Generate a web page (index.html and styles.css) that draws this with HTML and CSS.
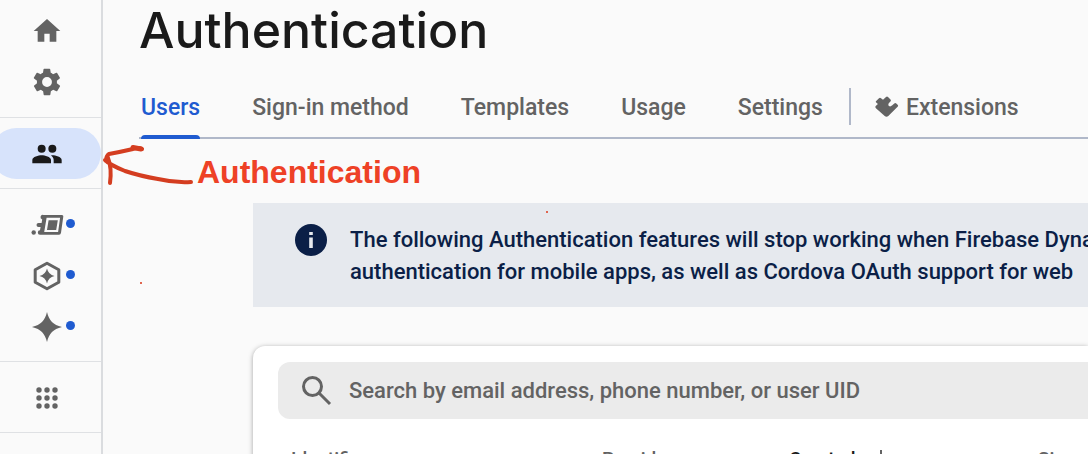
FILE: index.html
```html
<!DOCTYPE html>
<html lang="en">
<head>
<meta charset="utf-8">
<title>Authentication</title>
<link rel="stylesheet" href="styles.css">
</head>
<body>
<div class="app">
  <nav class="sidebar" aria-label="Project">
    <div class="group">
      <a class="item" href="#" aria-label="Project overview"><svg class="icon" viewBox="0 0 24 24"><path d="M10 20v-6h4v6h5v-8h3L12 3 2 12h3v8z"/></svg></a>
      <a class="item" href="#" aria-label="Settings"><svg class="icon" viewBox="0 0 24 24"><path fill-rule="evenodd" d="M19.400 13a7.500 7.500 0 0 0 0-2l2.100-1.600a.5.5 0 0 0 .1-.7l-2-3.400a.5.5 0 0 0-.6-.2l-2.500 1a7.300 7.300 0 0 0-1.700-1l-.4-2.600a.5.5 0 0 0-.5-.4h-4a.5.5 0 0 0-.5.4l-.4 2.600a7.300 7.300 0 0 0-1.700 1l-2.500-1a.5.5 0 0 0-.6.2l-2 3.400a.5.5 0 0 0 .1.700L4.500 11a7.500 7.500 0 0 0 0 2l-2.100 1.600a.5.5 0 0 0-.1.700l2 3.400c.1.200.4.300.6.200l2.500-1c.5.400 1.100.7 1.700 1l.4 2.600c0 .2.2.4.5.4h4c.2 0 .5-.2.500-.4l.4-2.600c.6-.3 1.200-.6 1.700-1l2.500 1c.2.100.5 0 .6-.2l2-3.400a.5.5 0 0 0-.1-.7zM12 15.700a3.700 3.700 0 1 1 0-7.400 3.700 3.700 0 0 1 0 7.400z"/></svg></a>
    </div>
    <div class="group">
      <a class="item active" href="#" aria-label="Authentication" aria-current="page"><svg class="icon" viewBox="0 0 24 24"><path d="M16 11a3 3 0 1 0 0-6 3 3 0 0 0 0 6zM8 11a3 3 0 1 0 0-6 3 3 0 0 0 0 6zm0 2c-2.330 0-7 1.170-7 3.500V19h14v-2.500c0-2.330-4.670-3.500-7-3.500zm8 0c-.29 0-.62.020-.97.050 1.160.84 1.970 1.970 1.970 3.450V19h6v-2.500c0-2.330-4.670-3.500-7-3.500z"/></svg></a>
    </div>
    <div class="group">
      <a class="item" href="#" aria-label="Data Connect"><svg class="icon" viewBox="0 0 32 32"><path fill-rule="evenodd" d="M12.500 6H31q1.500 0 1.300 1.500l-2.300 16.300q-.3 1.900-2 1.900H9a2.200 2.200 0 0 1 0-4.400l.6-3.300H7.500a2 2 0 0 1 0-4h3.100l.6-3.500A2.300 2.300 0 0 1 12.500 6zm3.100 2.800-2.400 14.100h13.900l2-14.100zM17.600 11.300h9.200l-1.600 9.700h-9.200z"/><circle cx="2.700" cy="23.500" r="2.200"/></svg><span class="badge"></span></a>
      <a class="item" href="#" aria-label="App Hosting"><svg class="icon" viewBox="0 0 32 32"><path class="outline" d="M16 3.200 27.800 9.800V22.200L16 28.800 4.200 22.200V9.800z"/><path d="M16 8.500Q17.400 14.600 23.500 16 17.400 17.400 16 23.500 14.600 17.400 8.500 16 14.600 14.600 16 8.500z"/></svg><span class="badge"></span></a>
      <a class="item" href="#" aria-label="AI Logic"><svg class="icon" viewBox="0 0 32 32"><path d="M16 1C18.300 10 22 13.700 31 16 22 18.300 18.300 22 16 31 13.700 22 10 18.300 1 16 10 13.700 13.700 10 16 1z"/></svg><span class="badge"></span></a>
    </div>
    <div class="group">
      <a class="item" href="#" aria-label="All products"><svg class="icon" viewBox="0 0 32 32"><circle cx="8" cy="8" r="2.700"/><circle cx="16" cy="8" r="2.700"/><circle cx="24" cy="8" r="2.700"/><circle cx="8" cy="16" r="2.700"/><circle cx="16" cy="16" r="2.700"/><circle cx="24" cy="16" r="2.700"/><circle cx="8" cy="24" r="2.700"/><circle cx="16" cy="24" r="2.700"/><circle cx="24" cy="24" r="2.700"/></svg></a>
    </div>
  </nav>
  <main class="main">
    <h1 class="title">Authentication</h1>
    <nav class="tabs" aria-label="Authentication sections">
      <a class="tab selected" href="#" aria-current="page">Users</a>
      <a class="tab" href="#">Sign-in method</a>
      <a class="tab" href="#">Templates</a>
      <a class="tab" href="#">Usage</a>
      <a class="tab" href="#">Settings</a>
      <a class="tab extensions" href="#"><svg class="puzzle" viewBox="0 0 24 24"><path d="M1.200 5 4 2.200Q5 1.300 6 2.200L8 3.800 11 1Q12 0 13 1L15.500 3.500Q16.300 4.500 15.400 5.400L14 7Q12.700 8.800 14 10 15.300 11 17 9.600L19.300 7.400Q20.300 6.500 21.300 7.400L22.600 8.700Q23.600 9.700 22.600 10.700L13.300 20Q11.500 21.600 9.700 20L1.200 12.500Q-.4 11 1 9.700L2.900 8 1.200 6.500Q.4 5.700 1.200 5z"/></svg>Extensions</a>
    </nav>
    <div class="content">
      <section class="banner">
        <svg class="info" viewBox="0 0 32 32"><circle cx="16" cy="16" r="16"/><path class="mark" d="M14.200 13.500h3.600V24h-3.600zM14.200 8h3.600v3h-3.600z"/></svg>
        <p class="message">The following Authentication features will stop working when Firebase Dynamic Links shuts down: email link<br>authentication for mobile apps, as well as Cordova OAuth support for web</p>
      </section>
      <section class="card">
        <label class="search">
          <svg class="lens" viewBox="0 0 32 32"><circle cx="11.500" cy="11.500" r="9"/><path d="M18 18 29 29"/></svg>
          <input class="field" type="search" placeholder="Search by email address, phone number, or user UID" aria-label="Search users">
        </label>
        <table class="users">
          <colgroup><col class="col-id"><col class="col-providers"><col class="col-created"><col></colgroup>
          <thead><tr><th>Identifier</th><th>Providers</th><th class="sorted"><span class="sort-label">Created <svg class="sort" viewBox="0 0 20 20"><path d="M10 1v16M3 11l7 7 7-7"/></svg></span></th><th>Signed In</th></tr></thead>
        </table>
      </section>
    </div>
  </main>
  <div class="note">
    <svg class="arrow" viewBox="0 0 100 50"><path d="M42 9Q38 7 33 9 20 12 9 14 6 16 6 21M5 20Q10 25 25 31 40 36 58 39 75 43 91 42M8 18Q12 28 10 43"/><path class="tip" d="M33 7.500 41 9"/></svg>
    <span class="note-text">Authentication</span>
  </div>
  <span class="speck speck-left"></span>
  <span class="speck speck-banner"></span>
</div>
</body>
</html>
```
FILE: styles.css
```css
* { box-sizing: border-box; }
body { margin: 0; background: #fafafa; color: #1a1a1a; font-family: Roboto, "Liberation Sans", sans-serif; overflow: hidden; }
a { color: inherit; text-decoration: none; }
.app { position: relative; display: flex; height: 100vh; overflow: hidden; }
.sidebar { flex: none; width: 103px; border-right: 2px solid #dadcdf; color: #636363; overflow: hidden; }
.group { padding: 10px 0 9px; border-bottom: 1px solid #dfe1e4; }
.group:first-child { padding: 5px 0 10px; }
.item { position: relative; display: flex; align-items: center; height: 51px; padding-left: 31px; }
.active { margin-left: -9px; padding-left: 40px; border-radius: 26px; background: #d7e3fb; color: #1a1a1a; }
.icon { width: 32px; height: 32px; fill: currentColor; overflow: visible; }
.outline { fill: none; stroke: currentColor; stroke-width: 3; stroke-linejoin: round; }
.badge { position: absolute; left: 66px; top: 20px; width: 9px; height: 9px; border-radius: 50%; background: #1f5bd0; }
.main { flex: 1; min-width: 0; padding-left: 36px; overflow: hidden; }
.title { margin: 0; font-family: Inter, sans-serif; font-size: 50px; line-height: 60px; font-weight: 500; }
.tabs { display: flex; align-items: center; gap: 52px; height: 79px; padding: 16px 0 0 2px; border-bottom: 2px solid #b0b8c9; color: #636363; font-size: 23px; font-weight: 500; white-space: nowrap; }
.tab { position: relative; display: flex; align-items: center; height: 61px; padding-top: 2px; }
.selected { color: #1f5bd0; }
.selected::after { content: ""; position: absolute; left: 0; right: 0; bottom: -2px; height: 4px; border-radius: 4px 4px 0 0; background: #1f5bd0; }
.extensions { height: 37px; margin-left: -26px; padding-left: 24px; border-left: 2px solid #b0b8c9; gap: 7px; }
.puzzle { width: 24px; height: 24px; fill: currentColor; }
.content { padding: 64px 0 0 114px; }
.banner { display: flex; gap: 23px; padding: 21px 0 19px 42px; background: #e6e9ee; color: #0b1f47; }
.info { flex: none; width: 32px; height: 32px; fill: currentColor; }
.mark { fill: #e6e9ee; }
.message { margin: 0; font-size: 22px; line-height: 32px; font-weight: 500; white-space: nowrap; }
.card { margin-top: 39px; padding: 16px 0 20px 25px; border-radius: 12px 0 0 0; background: #fff; box-shadow: 0 1px 5px rgba(0, 0, 0, .35); }
.search { display: flex; align-items: center; gap: 16px; height: 57px; padding-left: 23px; border-radius: 12px 0 0 12px; background: #ebebeb; }
.lens { flex: none; width: 32px; height: 32px; fill: none; stroke: #636363; stroke-width: 3; }
.field { flex: 1; min-width: 0; padding: 0; border: 0; outline: 0; background: none; font: 500 22px/32px Roboto, sans-serif; color: #1a1a1a; }
.field::placeholder { color: #636363; opacity: 1; }
.users { width: 100%; margin-top: 24px; border-collapse: collapse; table-layout: fixed; color: #636363; font-size: 19px; line-height: 32px; text-align: left; }
.users th { padding: 0 0 0 13px; font-weight: 500; white-space: nowrap; }
.col-id { width: 311px; }
.col-providers { width: 187px; }
.col-created { width: 249px; }
.users .sorted { color: #1a1a1a; }
.sort-label { display: flex; align-items: center; gap: 15px; }
.sort { width: 20px; height: 20px; fill: none; stroke: #636363; stroke-width: 2; }
.note { position: absolute; left: 100px; top: 140px; display: flex; color: #ee4126; pointer-events: none; }
.arrow { width: 100px; height: 50px; fill: none; stroke: #d43d20; stroke-width: 4; stroke-linecap: round; stroke-linejoin: round; }
.tip { stroke-width: 5; }
.note-text { margin-left: -3px; padding-top: 14px; font: bold 32px/36px "Liberation Sans", sans-serif; }
.speck { position: absolute; width: 2px; height: 2px; background: #e0654f; }
.speck-left { left: 140px; top: 282px; }
.speck-banner { left: 546px; top: 211px; }
```
